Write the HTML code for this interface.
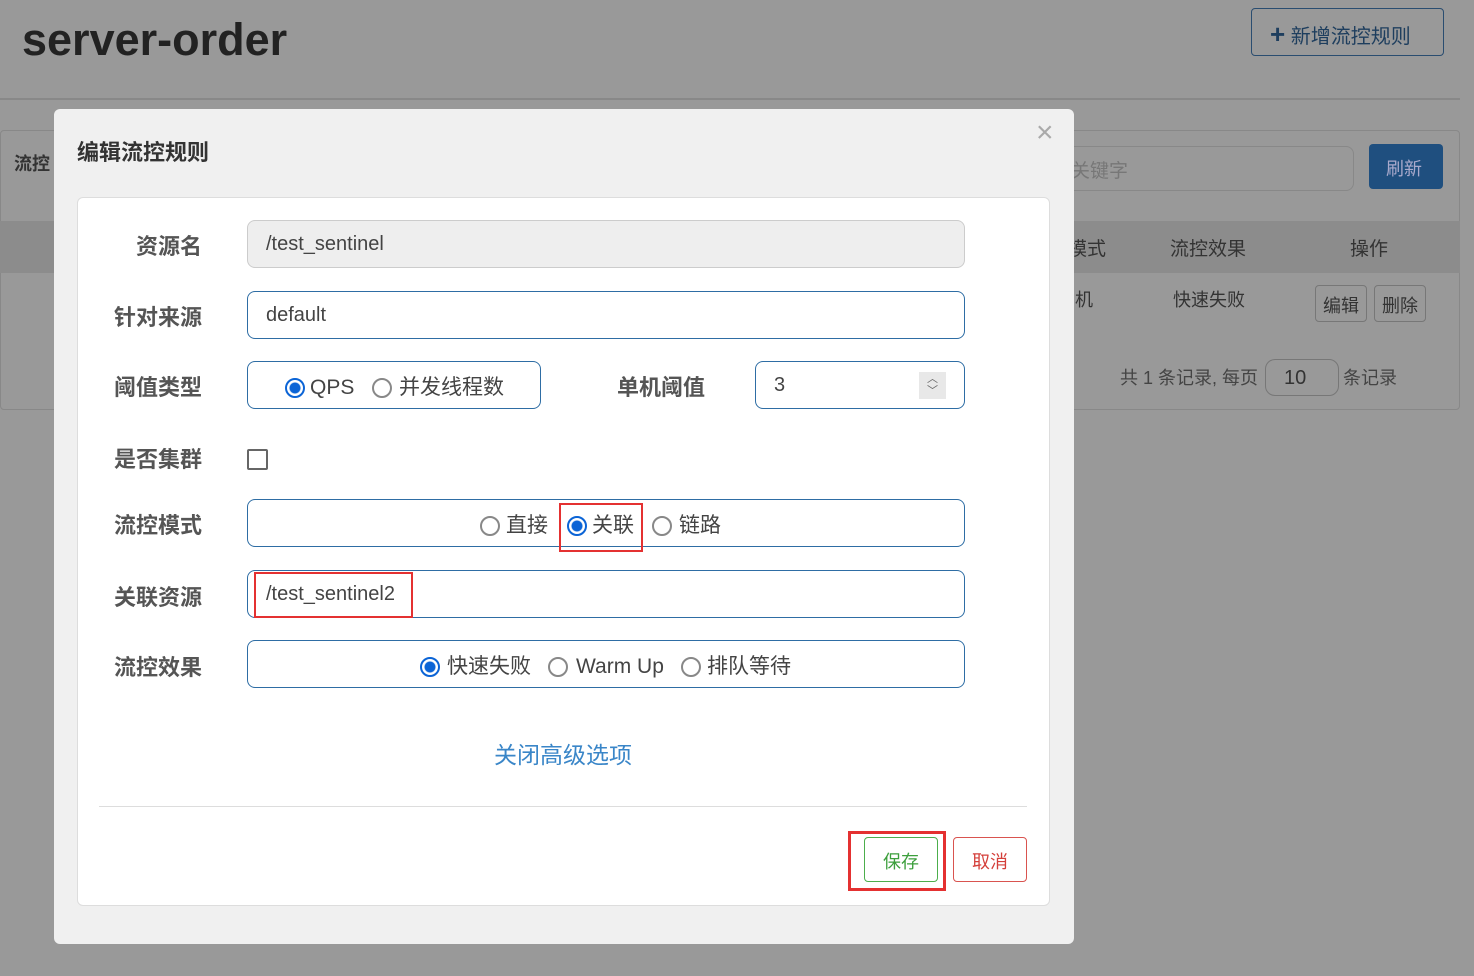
<!DOCTYPE html>
<html><head><meta charset="utf-8"><style>
*{box-sizing:border-box;margin:0;padding:0}
body{width:1474px;height:976px;background:#999;position:relative;overflow:hidden;font-family:"Liberation Sans","Noto Sans CJK SC",sans-serif;color:#333}
.a{position:absolute}
.lbl{position:absolute;font-weight:bold;font-size:22px;color:#555;text-align:right;width:120px;left:82px;line-height:26px}
.inp{position:absolute;border:1px solid #2e6da4;border-radius:8px;background:#fff;height:48px;font-size:20px;color:#444;padding:0 18px;line-height:46px}
.r{position:absolute;width:20px;height:20px;border:2px solid #888;border-radius:50%;background:#fff}
.r.on{border:2px solid #0b64d6;background:radial-gradient(circle,#0b64d6 0 5px,#fff 6px)}
.t{position:absolute;font-size:21px;color:#444;line-height:26px;height:26px}
.red{position:absolute;border:2px solid #e43131}
</style></head><body>
<div class="a" style="left:22px;top:14px;font-size:45px;font-weight:bold;color:#222">server-order</div>
<div class="a" style="left:1251px;top:8px;width:193px;height:48px;border:1px solid #2a4d70;border-radius:4px;color:#1e3e5e;font-size:20px;padding:11px 0 0 18px"><b style="font-size:26px;line-height:20px">+</b> 新增流控规则</div>
<div class="a" style="left:0;top:98px;width:1460px;height:2px;background:#888"></div>
<div class="a" style="left:0;top:130px;width:1460px;height:280px;border:1px solid #888;border-radius:4px"></div>
<div class="a" style="left:14px;top:150px;font-size:18px;font-weight:bold;color:#333">流控</div>
<div class="a" style="left:1040px;top:146px;width:314px;height:45px;border:1px solid #888;border-radius:8px;font-size:19px;color:#777;padding:9px 30px">关键字</div>
<div class="a" style="left:1369px;top:144px;width:74px;height:45px;background:#1f4f7f;border-radius:4px;color:#aac;font-size:18px;padding:11px 17px">刷新</div>
<div class="a" style="left:0;top:221px;width:1460px;height:52px;background:#8c8c8c"></div>
<div class="a" style="left:1068px;top:234px;font-size:19px;color:#333">模式</div>
<div class="a" style="left:1170px;top:234px;font-size:19px;color:#333">流控效果</div>
<div class="a" style="left:1350px;top:234px;font-size:19px;color:#333">操作</div>
<div class="a" style="left:1075px;top:286px;font-size:18px;color:#333">机</div>
<div class="a" style="left:1173px;top:286px;font-size:18px;color:#333">快速失败</div>
<div class="a" style="left:1315px;top:285px;width:52px;height:37px;border:1px solid #777;border-radius:4px;font-size:18px;padding:6px 7px">编辑</div>
<div class="a" style="left:1374px;top:285px;width:52px;height:37px;border:1px solid #777;border-radius:4px;font-size:18px;padding:6px 7px">删除</div>
<div class="a" style="left:1120px;top:364px;font-size:18px;color:#444">共 1 条记录, 每页</div>
<div class="a" style="left:1265px;top:359px;width:74px;height:37px;border:1px solid #777;border-radius:10px;font-size:20px;padding:7px 18px">10</div>
<div class="a" style="left:1343px;top:364px;font-size:18px;color:#444">条记录</div>

<div class="a" style="left:54px;top:109px;width:1020px;height:835px;background:#f0f0f0;border-radius:6px"></div>
<div class="a" style="left:1036px;top:116px;font-size:30px;color:#aaa">×</div>
<div class="a" style="left:77px;top:135px;font-size:22px;font-weight:bold;color:#333">编辑流控规则</div>
<div class="a" style="left:77px;top:197px;width:973px;height:709px;background:#fff;border:1px solid #ddd;border-radius:6px"></div>

<div class="lbl" style="top:234px">资源名</div>
<div class="inp" style="left:247px;top:220px;width:718px;background:#eee;border-color:#ccc">/test_sentinel</div>
<div class="lbl" style="top:305px">针对来源</div>
<div class="inp" style="left:247px;top:291px;width:718px">default</div>
<div class="lbl" style="top:375px">阈值类型</div>
<div class="inp" style="left:247px;top:361px;width:294px"></div>
<span class="r on" style="left:285px;top:378px"></span><span class="t" style="left:310px;top:375px">QPS</span>
<span class="r" style="left:372px;top:378px"></span><span class="t" style="left:399px;top:375px">并发线程数</span>
<div class="a" style="left:617px;top:375px;font-size:22px;font-weight:bold;color:#555;line-height:26px">单机阈值</div>
<div class="inp" style="left:755px;top:361px;width:210px">3<span class="a" style="right:18px;top:10px;width:27px;height:27px;background:#e8e8e8;font-size:11px;color:#666;text-align:center;line-height:12px;padding-top:1px">︿<br>﹀</span></div>
<div class="lbl" style="top:447px">是否集群</div>
<div class="a" style="left:247px;top:449px;width:21px;height:21px;border:2px solid #666;border-radius:2px"></div>
<div class="lbl" style="top:513px">流控模式</div>
<div class="inp" style="left:247px;top:499px;width:718px"></div>
<span class="r" style="left:480px;top:516px"></span><span class="t" style="left:506px;top:513px">直接</span>
<span class="r on" style="left:567px;top:516px"></span><span class="t" style="left:592px;top:513px">关联</span>
<span class="r" style="left:652px;top:516px"></span><span class="t" style="left:679px;top:513px">链路</span>
<div class="red" style="left:559px;top:503px;width:84px;height:49px"></div>
<div class="lbl" style="top:585px">关联资源</div>
<div class="inp" style="left:247px;top:570px;width:718px">/test_sentinel2</div>
<div class="red" style="left:254px;top:572px;width:159px;height:46px"></div>
<div class="lbl" style="top:655px">流控效果</div>
<div class="inp" style="left:247px;top:640px;width:718px"></div>
<span class="r on" style="left:420px;top:657px"></span><span class="t" style="left:447px;top:654px">快速失败</span>
<span class="r" style="left:548px;top:657px"></span><span class="t" style="left:576px;top:654px">Warm Up</span>
<span class="r" style="left:681px;top:657px"></span><span class="t" style="left:707px;top:654px">排队等待</span>
<div class="a" style="left:494px;top:736px;font-size:23px;color:#3a86c8">关闭高级选项</div>
<div class="a" style="left:99px;top:806px;width:928px;height:1px;background:#ddd"></div>
<div class="a" style="left:864px;top:837px;width:74px;height:45px;border:1px solid #4cae4c;border-radius:4px;color:#3c9f3c;font-size:18px;padding:10px 18px">保存</div>
<div class="red" style="left:848px;top:831px;width:98px;height:60px;border-width:3px"></div>
<div class="a" style="left:953px;top:837px;width:74px;height:45px;border:1px solid #d9534f;border-radius:4px;color:#d43f3a;font-size:18px;padding:10px 18px">取消</div>
</body></html>
